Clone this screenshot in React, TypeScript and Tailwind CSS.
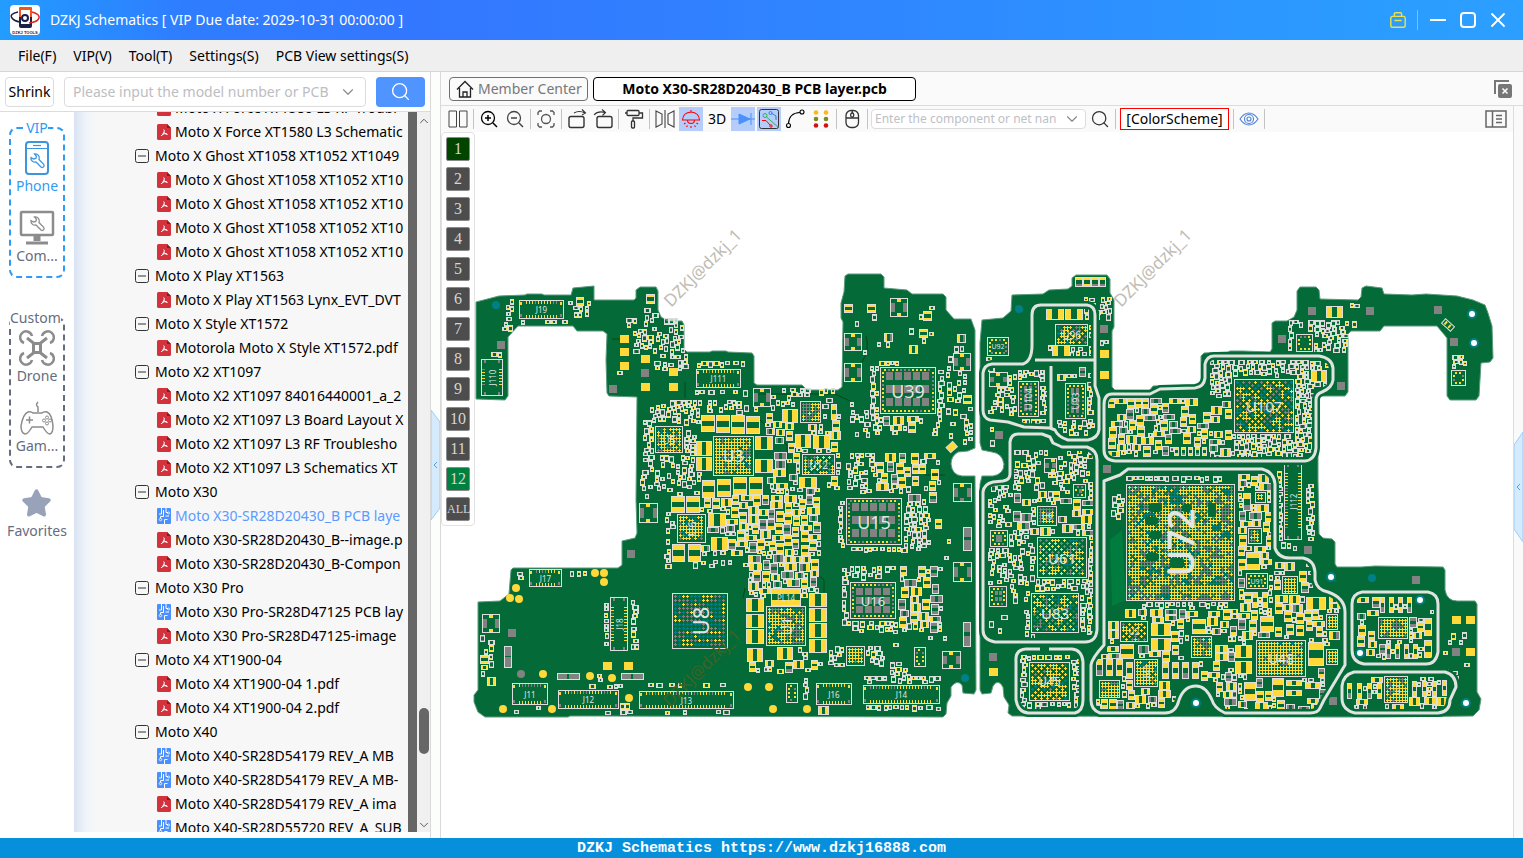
import React from "react";
import { ChevronDown, ChevronUp, Search, Star, X } from "lucide-react";

const GREEN = "#046a38";
const LINE = "#dcdfdb";
const YELLOW = "#ffd83a";
const GRAY = "#828282";
const TEAL = "#007f86";

/* ---------- board data ---------- */

const LEFT_BOARD =
  "M476 302L499 296L525 295L527 294L542 294L544 295L571 295L573 288L594 286L594 300L634 300L636 298L636 290L640 287L656 287L658 291L658 310L661 317L668 321L682 321L684 325L684 349L687 352L710 352L712 351L726 351L728 352L752 353L754 356L754 383L757 385L802 385L807 390L838 390L842 387L843 322L841 318L841 303L844 292L845 276L848 274L881 274L884 277L884 288L907 290L912 294L943 294L946 297L946 310L954 319L971 319L975 330L975 448L968 451L958 452Q951 456 951 464Q952 475 962 476L975 476L976 690L974 694L963 693L962 685Q957 679 951 687L951 696L947 703L946 714L943 717L593 716L570 716L568 717L485 717L478 712L474 702L474 695L478 690L478 602L500 601L509 594L511 570L513 568L618 568L622 565L622 541L635 538L637 533L636 500L637 397L609 396L607 393L606 360L607 334L603 331L577 331L573 326L518 326L508 337L508 396L505 400L476 399Z";
const RIGHT_BOARD =
  "M982 320L1003 318L1011 311L1012 295L1043 294L1049 290L1068 289L1072 286L1072 278L1076 275L1107 275L1110 279L1110 293L1114 300L1114 327L1112 331L1112 387L1115 390L1150 390L1153 386L1198 385L1201 381L1201 356L1204 353L1228 352L1230 351L1243 351L1270 352L1272 349L1272 323L1275 321L1287 321L1294 317L1297 310L1297 291L1300 287L1316 287L1319 290L1320 299L1358 300L1361 297L1362 288L1366 286L1382 288L1384 294L1412 295L1426 294L1457 296L1473 300L1485 305L1488 313L1492 326L1493 358L1490 362L1481 363L1479 396L1476 400L1450 400L1447 396L1447 338L1437 326L1384 326L1380 331L1351 331L1348 334L1348 392L1345 396L1320 396L1318 400L1318 480L1319 534L1323 538L1332 539L1335 542L1335 564L1337 567L1361 567L1375 566L1443 567L1445 570L1445 590Q1447 601 1457 601L1475 601L1477 604L1477 692L1481 699L1479 710L1473 716L1380 717L1320 717L1012 716L1008 713L1009 705L1004 697L1003 687Q998 678 993 686L991 693L982 694L980 690L980 484L982 476L993 476Q1004 474 1004 464Q1002 453 992 452L982 450L980 443L980 343Z";

const SHIELDS = [
  "M1032 345V315Q1032 305 1041 305H1087Q1095 306 1095 315V386L1099 398V430Q1098 438 1088 440H1068Q1058 437 1055 430L1050 428L1024 427L1008 422L990 420Q983 418 983 410V373Q984 365 992 364H1023Q1032 361 1032 345Z",
  "M1035 360H1095M1051 366V429",
  "M1010 474V442Q1011 434 1018 434H1042L1050 437L1053 443L1062 447H1087Q1097 450 1097 460V630Q1096 642 1085 642H995Q983 640 983 630V492Q984 484 993 482L1003 481Q1010 480 1010 474Z",
  "M1040 649H1026Q1015 650 1016 661V700Q1018 712 1028 713H1075Q1083 711 1083 700V662Q1082 650 1072 649H1049",
  "M1104 405Q1104 394 1112 394H1150L1160 389L1195 388Q1204 387 1205 378V364Q1207 356 1214 356H1319Q1332 358 1333 368V380Q1332 388 1322 392Q1316 394 1316 400V448Q1315 460 1305 461H1115Q1104 460 1104 450Z",
  "M1104 487V481L1120 475L1128 469H1262Q1274 472 1275 484V548Q1278 558 1290 558H1303Q1314 560 1315 572V580Q1317 590 1328 592Q1345 598 1345 612V665L1324 700L1320 708Q1318 713 1310 713H1225Q1214 708 1212 700Q1206 686 1196 686Q1184 686 1179 700Q1176 713 1165 713H1100Q1091 710 1091 700V665Q1092 658 1104 645V487",
  "M1362 592H1428Q1438 594 1438 604V652Q1436 664 1426 664H1364Q1352 662 1352 650V604Q1352 594 1362 592Z",
  "M1354 672H1445Q1456 675 1456 687L1450 700Q1450 712 1438 713H1355Q1342 710 1342 698V686Q1343 675 1354 672Z",
];

type Rect = [number, number, number, number];
type Labelled = { r: Rect; name?: string; size?: number; turn?: boolean };
type Grid = "lattice" | "diagonal" | "sparse";

// ball grids, "mix" is the share of yellow / gray balls, the rest is teal
const BGAS: (Labelled & { mix: [number, number]; grid: Grid })[] = [
  { r: [714, 437, 39, 38], name: "U3", size: 16, mix: [0.7, 0.9], grid: "lattice" },
  { r: [656, 427, 26, 25], name: "U5", size: 10, mix: [0.6, 0.85], grid: "lattice" },
  { r: [678, 515, 27, 27], name: "U6", size: 11, turn: true, mix: [0.65, 0.85], grid: "lattice" },
  { r: [767, 607, 38, 38], name: "U1", size: 14, turn: true, mix: [0.7, 0.9], grid: "lattice" },
  { r: [803, 455, 31, 19], name: "U12", size: 10, mix: [0.6, 0.85], grid: "diagonal" },
  { r: [801, 402, 19, 20], mix: [0.5, 1], grid: "lattice" },
  { r: [847, 647, 17, 18], mix: [0.9, 1], grid: "lattice" },
  { r: [673, 594, 54, 54], name: "U8", size: 22, turn: true, mix: [0.25, 0.6], grid: "sparse" },
  { r: [1056, 325, 31, 20], name: "U96", size: 10, mix: [0.6, 0.85], grid: "diagonal" },
  { r: [1038, 538, 48, 39], name: "U61", size: 15, mix: [0.55, 0.95], grid: "diagonal" },
  { r: [1032, 594, 46, 38], name: "U83", size: 15, mix: [0.5, 0.8], grid: "diagonal" },
  { r: [1030, 663, 39, 37], name: "U45", size: 12, mix: [0.6, 0.88], grid: "diagonal" },
  { r: [1038, 507, 18, 18], name: "U9", size: 8, mix: [0.5, 1], grid: "lattice" },
  { r: [1235, 380, 58, 52], name: "U107", size: 15, mix: [0.5, 0.78], grid: "diagonal" },
  { r: [1127, 485, 107, 115], name: "U72", size: 36, turn: true, mix: [0.62, 0.92], grid: "lattice" },
  { r: [1121, 622, 26, 19], name: "U2", size: 8, mix: [0.75, 0.95], grid: "diagonal" },
  { r: [1135, 660, 22, 26], name: "U41", size: 9, turn: true, mix: [0.85, 0.95], grid: "lattice" },
  { r: [1100, 681, 19, 16], mix: [0.8, 0.95], grid: "lattice" },
  { r: [1192, 637, 19, 20], mix: [0.6, 0.95], grid: "lattice" },
  { r: [1257, 641, 48, 35], name: "U48", size: 14, mix: [0.85, 0.94], grid: "lattice" },
  { r: [1379, 618, 28, 20], mix: [0.8, 1], grid: "lattice" },
  { r: [1385, 677, 22, 25], name: "U7", size: 8, turn: true, mix: [0.85, 1], grid: "lattice" },
  { r: [1283, 577, 14, 16], mix: [1, 1], grid: "lattice" },
  { r: [1327, 615, 10, 14], mix: [1, 1], grid: "lattice" },
  { r: [1327, 650, 10, 14], mix: [1, 1], grid: "lattice" },
  { r: [1249, 529, 12, 14], mix: [0.8, 1], grid: "lattice" },
  { r: [1256, 493, 9, 9], mix: [0.8, 1], grid: "lattice" },
];

const QFNS: (Labelled & { cols: number; rows: number })[] = [
  { r: [880, 367, 56, 47], name: "U39", size: 18, cols: 5, rows: 3 },
  { r: [846, 498, 56, 47], name: "U15", size: 18, cols: 5, rows: 3 },
  { r: [850, 582, 46, 37], name: "U16", size: 13, cols: 4, rows: 3 },
  { r: [1018, 381, 21, 36], name: "U104", size: 9, turn: true, cols: 2, rows: 3 },
  { r: [1065, 383, 21, 36], name: "U93", size: 9, turn: true, cols: 2, rows: 3 },
  { r: [987, 337, 22, 19], name: "U92", size: 7, cols: 0, rows: 0 },
  { r: [990, 530, 18, 17], cols: 1, rows: 1 },
  { r: [989, 586, 18, 21], cols: 2, rows: 2 },
  { r: [1073, 484, 13, 14], cols: 1, rows: 1 },
  { r: [1296, 334, 17, 18], cols: 0, rows: 0 },
  { r: [1451, 370, 15, 16], cols: 0, rows: 0 },
  { r: [786, 683, 12, 20], cols: 0, rows: 0 },
  { r: [914, 647, 12, 20], cols: 0, rows: 0 },
  { r: [1246, 573, 22, 16], name: "U91", size: 7, cols: 0, rows: 0 },
];

const CONNECTORS: Labelled[] = [
  { r: [519, 300, 45, 19], name: "J19" },
  { r: [696, 369, 45, 19], name: "J111" },
  { r: [481, 359, 22, 37], name: "J110", turn: true },
  { r: [529, 569, 33, 18], name: "J17" },
  { r: [610, 597, 18, 54], name: "J18", turn: true },
  { r: [512, 683, 36, 22], name: "J11" },
  { r: [558, 690, 61, 19], name: "J12" },
  { r: [639, 691, 95, 18], name: "J13" },
  { r: [816, 683, 36, 22], name: "J16" },
  { r: [863, 685, 77, 19], name: "J14" },
  { r: [1284, 463, 18, 77], name: "J112", turn: true },
];

// inductors and big capacitors, pads left/right when turned
const COILS: { r: Rect; side?: boolean }[] = [
  { r: [701, 415, 14, 17] }, { r: [716, 415, 14, 18] }, { r: [731, 415, 14, 19] }, { r: [746, 416, 14, 18] },
  { r: [696, 441, 16, 15], side: true }, { r: [696, 457, 16, 14], side: true },
  { r: [755, 436, 18, 14], side: true }, { r: [755, 459, 18, 14], side: true },
  { r: [702, 480, 13, 18] }, { r: [717, 479, 14, 18] }, { r: [733, 477, 14, 18] }, { r: [749, 477, 14, 18] },
  { r: [671, 496, 14, 17] }, { r: [686, 496, 14, 17] },
  { r: [708, 513, 18, 14], side: true }, { r: [711, 537, 17, 14], side: true },
  { r: [672, 544, 13, 18] }, { r: [688, 544, 13, 18] },
  { r: [746, 598, 18, 14], side: true }, { r: [746, 614, 18, 14], side: true },
  { r: [746, 629, 18, 15], side: true }, { r: [747, 648, 16, 14], side: true },
  { r: [809, 593, 18, 14], side: true }, { r: [809, 608, 18, 14], side: true },
  { r: [809, 623, 18, 15], side: true }, { r: [809, 639, 18, 14], side: true },
  { r: [777, 647, 16, 13], side: true }, { r: [771, 588, 30, 18] },
  { r: [782, 409, 16, 14], side: true }, { r: [795, 434, 16, 14], side: true },
  { r: [813, 435, 17, 14], side: true }, { r: [799, 477, 18, 11], side: true },
  { r: [831, 404, 6, 16] }, { r: [844, 304, 9, 9] }, { r: [867, 304, 9, 9] },
  { r: [923, 311, 9, 10] }, { r: [884, 333, 9, 9], side: true }, { r: [919, 329, 9, 9] },
  { r: [909, 345, 9, 9], side: true }, { r: [957, 334, 9, 9], side: true }, { r: [963, 395, 9, 9] },
  { r: [646, 294, 9, 10] }, { r: [576, 297, 8, 9] }, { r: [480, 655, 9, 9] }, { r: [487, 677, 9, 9], side: true },
  { r: [1046, 308, 18, 12], side: true }, { r: [1065, 308, 18, 12], side: true }, { r: [1052, 345, 18, 12], side: true },
  { r: [1151, 623, 20, 13], side: true }, { r: [1151, 638, 20, 13], side: true }, { r: [1192, 619, 14, 15] },
  { r: [1120, 644, 14, 15] }, { r: [1235, 645, 17, 13], side: true }, { r: [1235, 661, 17, 13], side: true },
  { r: [1096, 659, 7, 17] }, { r: [1106, 659, 7, 17] }, { r: [1116, 659, 7, 17] }, { r: [1126, 662, 7, 17] },
  { r: [1162, 662, 7, 17] }, { r: [1172, 662, 7, 17] }, { r: [1182, 662, 7, 17] }, { r: [1192, 662, 7, 17] },
  { r: [1246, 552, 14, 18] }, { r: [1243, 493, 8, 18] }, { r: [1260, 616, 14, 16] },
  { r: [1308, 642, 16, 24] }, { r: [1272, 678, 12, 19] }, { r: [1244, 682, 12, 19] },
  { r: [1286, 680, 16, 6], side: true }, { r: [1286, 690, 16, 6], side: true }, { r: [1305, 682, 16, 7], side: true },
  { r: [1306, 597, 20, 13], side: true }, { r: [1252, 592, 6, 16] }, { r: [1262, 592, 6, 16] },
  { r: [1424, 618, 8, 18] }, { r: [1424, 640, 8, 18] }, { r: [1380, 597, 5, 16] }, { r: [1389, 597, 5, 16] },
  { r: [1398, 597, 5, 16] }, { r: [1407, 597, 5, 16] }, { r: [1386, 644, 5, 15] }, { r: [1395, 644, 5, 15] },
  { r: [1404, 644, 5, 15] }, { r: [1413, 644, 5, 15] }, { r: [1347, 683, 5, 16] }, { r: [1357, 683, 5, 16] },
  { r: [1367, 683, 5, 16] }, { r: [1377, 683, 5, 16] }, { r: [1412, 681, 5, 16] }, { r: [1422, 681, 5, 16] },
  { r: [1432, 681, 5, 16] }, { r: [1442, 680, 5, 16] }, { r: [1326, 306, 17, 12], side: true },
  { r: [1311, 370, 16, 12], side: true }, { r: [1174, 447, 5, 9] }, { r: [1181, 447, 5, 9] }, { r: [1188, 447, 5, 9] },
  { r: [1195, 447, 5, 9] }, { r: [1202, 447, 5, 9] },
  { r: [1075, 277, 8, 10] }, { r: [1083, 277, 8, 10] }, { r: [1091, 277, 8, 10] }, { r: [1099, 277, 7, 10] },
];

const CLIPS: Rect[] = [
  [753, 388, 18, 19], [639, 503, 19, 20], [890, 298, 18, 19], [844, 333, 18, 18], [844, 363, 18, 19],
  [953, 353, 18, 18], [953, 483, 19, 19], [953, 562, 19, 20], [942, 651, 19, 18], [482, 614, 18, 19],
  [989, 372, 19, 15], [1044, 458, 13, 15],
];
const BARS: Rect[] = [
  [963, 527, 9, 24], [963, 622, 8, 25], [504, 646, 8, 22], [557, 673, 23, 7], [621, 673, 23, 7],
];
const GRAY_PADS = [
  [497, 341], [641, 369], [609, 385], [627, 550], [508, 629], [1100, 325], [995, 431], [1103, 465], [989, 653],
  [1308, 307], [1366, 307], [1434, 306], [1450, 338], [1278, 335], [1337, 382], [1304, 546], [1412, 576],
  [1452, 648], [1329, 697],
];
const YELLOW_PADS = [
  [620, 335], [620, 348], [620, 362], [641, 355], [641, 383], [669, 383], [669, 368], [603, 662], [624, 662],
  [1100, 350], [1100, 371], [1452, 616], [1466, 616], [1466, 648], [989, 668],
];
const POINTS = [
  [595, 573], [604, 573], [604, 582], [516, 588], [510, 598], [519, 599], [543, 674], [590, 676], [612, 678],
  [503, 709], [552, 709], [629, 698], [748, 687], [769, 687], [773, 709], [807, 709],
];
const HOLES = [[1472, 314], [1474, 343], [1331, 577], [1420, 600], [1360, 653], [1466, 703], [1196, 703]];
const TEAL_DOTS = [[496, 305], [965, 678], [1019, 309], [1372, 578]];

// areas filled with chip resistors / capacitors: x, y, w, h, density, size class
const ZONES: [number, number, number, number, number, number][] = [
  [506, 298, 8, 22, 0.9, 0], [499, 322, 14, 10, 0.6, 0], [516, 320, 54, 5, 0.7, 0], [568, 300, 22, 18, 0.6, 0],
  [491, 352, 15, 6, 0.9, 0], [644, 304, 14, 20, 0.5, 0], [626, 318, 58, 16, 0.5, 0], [633, 330, 52, 24, 0.6, 0],
  [654, 354, 34, 18, 0.5, 0], [614, 370, 22, 14, 0.4, 0], [690, 390, 60, 6, 0.7, 0], [697, 361, 50, 7, 0.8, 0],
  [650, 400, 50, 26, 0.75, 0], [643, 420, 12, 46, 0.7, 0], [682, 430, 14, 60, 0.8, 0], [647, 455, 60, 40, 0.5, 0],
  [695, 400, 70, 16, 0.7, 0], [638, 470, 22, 30, 0.45, 0], [770, 388, 66, 26, 0.55, 0], [765, 410, 75, 80, 0.7, 1],
  [700, 495, 120, 60, 0.88, 1], [762, 480, 58, 110, 0.9, 1], [664, 512, 14, 50, 0.7, 0], [650, 560, 100, 8, 0.6, 0],
  [748, 555, 70, 42, 0.85, 1], [748, 660, 70, 14, 0.5, 1], [793, 645, 14, 22, 0.6, 0], [800, 660, 24, 6, 0.7, 0],
  [846, 306, 104, 50, 0.28, 0], [870, 366, 9, 58, 0.95, 0], [937, 370, 7, 52, 0.9, 0], [876, 361, 26, 5, 0.9, 0],
  [850, 402, 30, 36, 0.5, 0], [868, 416, 72, 20, 0.75, 1], [946, 346, 26, 98, 0.5, 0], [848, 300, 40, 40, 0.25, 0],
  [845, 453, 30, 40, 0.7, 0], [870, 453, 70, 40, 0.75, 1], [838, 500, 8, 48, 0.8, 0], [904, 506, 26, 44, 0.9, 0],
  [905, 478, 38, 34, 0.6, 1], [850, 547, 60, 5, 0.8, 0], [926, 500, 26, 60, 0.35, 1], [842, 568, 8, 60, 0.85, 0],
  [850, 566, 46, 14, 0.7, 0], [898, 566, 44, 66, 0.7, 1], [852, 621, 46, 12, 0.9, 0], [828, 646, 56, 22, 0.85, 0],
  [880, 636, 70, 10, 0.2, 0], [890, 662, 20, 22, 0.8, 0], [862, 676, 82, 8, 0.9, 0], [866, 705, 74, 6, 0.9, 0],
  [645, 683, 90, 6, 0.65, 0], [585, 684, 40, 6, 0.7, 0], [620, 703, 20, 12, 0.7, 0], [480, 634, 14, 50, 0.55, 0],
  [604, 602, 6, 46, 0.8, 0], [631, 600, 7, 50, 0.9, 0], [568, 571, 24, 7, 0.9, 0], [517, 572, 8, 12, 0.9, 0],
  [513, 706, 30, 7, 0.7, 1], [600, 711, 30, 4, 0.6, 0], [665, 710, 70, 4, 0.5, 0], [803, 678, 8, 22, 0.8, 0],
  [818, 706, 26, 8, 0.7, 1], [745, 663, 18, 10, 0.7, 1], [597, 674, 10, 8, 0.9, 0],
  // right board
  [1048, 307, 44, 50, 0.7, 0], [1083, 297, 28, 26, 0.7, 0], [1100, 340, 10, 10, 0.8, 0], [986, 356, 26, 4, 0.9, 0],
  [988, 367, 28, 50, 0.55, 0], [1018, 370, 30, 9, 0.8, 0], [1040, 378, 8, 44, 0.85, 0], [1087, 372, 7, 58, 0.85, 0],
  [1055, 366, 30, 14, 0.7, 1], [1056, 420, 34, 15, 0.6, 0], [1022, 419, 22, 6, 0.9, 0], [990, 425, 5, 24, 0.8, 0],
  [1013, 450, 80, 40, 0.6, 0], [1013, 480, 80, 56, 0.7, 1], [988, 485, 48, 100, 0.6, 0], [988, 570, 30, 66, 0.4, 0],
  [1024, 540, 12, 100, 0.85, 0], [1034, 578, 54, 16, 0.85, 0], [1087, 536, 7, 104, 0.9, 0], [1080, 594, 8, 40, 0.8, 0],
  [1108, 398, 125, 58, 0.72, 1], [1210, 360, 104, 98, 0.95, 0], [1314, 361, 14, 28, 0.8, 0], [1020, 655, 60, 54, 0.85, 0],
  [1111, 494, 14, 26, 0.9, 0], [1126, 476, 100, 7, 0.85, 0], [1238, 474, 34, 238, 0.8, 1], [1142, 602, 86, 7, 0.85, 0],
  [1108, 609, 130, 34, 0.72, 1], [1094, 645, 142, 36, 0.72, 1], [1096, 680, 80, 30, 0.7, 1], [1216, 680, 30, 30, 0.8, 1],
  [1274, 562, 38, 30, 0.8, 1], [1270, 594, 70, 70, 0.8, 1], [1245, 665, 80, 46, 0.7, 1], [1277, 470, 6, 70, 0.95, 0],
  [1306, 484, 8, 56, 0.9, 0], [1281, 542, 16, 8, 0.9, 0], [1356, 597, 78, 62, 0.75, 1], [1347, 677, 102, 32, 0.75, 1],
  [1442, 632, 32, 50, 0.3, 0], [1288, 320, 60, 34, 0.75, 0], [1349, 303, 10, 7, 0.9, 0], [1350, 321, 12, 6, 0.9, 0],
  [1450, 355, 16, 13, 0.95, 0], [1318, 384, 10, 5, 0.9, 0],
];

/* ---------- board drawing ---------- */

function seeded(seed: number) {
  let a = seed;
  return () => {
    a = (a + 0x6d2b79f5) | 0;
    let t = Math.imul(a ^ (a >>> 15), 1 | a);
    t = (t + Math.imul(t ^ (t >>> 7), 61 | t)) ^ t;
    return ((t ^ (t >>> 14)) >>> 0) / 4294967296;
  };
}

function buildBoard() {
  const rnd = seeded(20430);
  const d = { outline: "", yellow: "", gray: "", teal: "" };
  const used = new Set<number>();

  const fill = (key: "yellow" | "gray" | "teal", x: number, y: number, w: number, h: number) => {
    d[key] += `M${x} ${y}h${w}v${h}h${-w}z`;
  };
  const frame = (x: number, y: number, w: number, h: number) => {
    d.outline += `M${x + 0.5} ${y + 0.5}h${w - 1}v${h - 1}h${1 - w}z`;
  };
  const mark = (x: number, y: number, w: number, h: number) => {
    for (let j = y; j < y + h; j++) for (let i = x; i < x + w; i++) used.add(j * 2000 + i);
  };
  const isFree = (x: number, y: number, w: number, h: number) => {
    for (let j = y; j < y + h; j++) for (let i = x; i < x + w; i++) if (used.has(j * 2000 + i)) return false;
    return true;
  };
  const metal = () => (rnd() < 0.72 ? "yellow" : "gray");

  BGAS.forEach(({ r: [x, y, w, h], mix, grid }) => {
    mark(x - 2, y - 2, w + 4, h + 4);
    frame(x - 1, y - 1, w + 2, h + 2);
    const pitch = grid === "sparse" ? 4 : 3;
    const noise: Record<string, number> = {};
    for (let j = y + 1; j + 3 <= y + h; j += pitch) {
      for (let i = x + 1; i + 3 <= x + w; i += pitch) {
        if (grid === "diagonal" && ((i - x - 1) / 3 + (j - y - 1) / 3) % 2 === 1 && rnd() < 0.7) continue;
        const key = `${Math.floor(i / 10)}-${Math.floor(j / 9)}`;
        noise[key] = noise[key] ?? rnd();
        const n = rnd() < 0.5 ? noise[key] : rnd();
        const c = n < mix[0] ? "yellow" : n < mix[1] ? "gray" : "teal";
        fill(c, i, j + 1, 3, 1);
        fill(c, i + 1, j, 1, 1);
        fill(c, i + 1, j + 2, 1, 1);
      }
    }
  });

  QFNS.forEach(({ r: [x, y, w, h], cols, rows }) => {
    mark(x - 1, y - 1, w + 2, h + 2);
    frame(x, y, w, h);
    for (let i = x + 4; i < x + w - 4; i += 4) {
      fill(metal(), i, y + 2, 2, 2);
      fill(metal(), i, y + h - 4, 2, 2);
    }
    for (let j = y + 5; j < y + h - 5; j += 4) {
      fill(metal(), x + 2, j, 2, 2);
      fill(metal(), x + w - 4, j, 2, 2);
    }
    if (!cols) return;
    const cw = Math.floor((w - 10) / cols);
    const ch = Math.floor((h - 8) / rows);
    const ox = x + Math.floor((w - cw * cols) / 2) + 1;
    const oy = y + Math.floor((h - ch * rows) / 2) + 1;
    for (let c = 0; c < cols; c++)
      for (let k = 0; k < rows; k++)
        fill("gray", ox + c * cw, oy + k * ch, Math.max(cw - 2, 3), Math.max(ch - (ch > 11 ? 5 : 2), 4));
  });

  CONNECTORS.forEach(({ r: [x, y, w, h], turn }) => {
    mark(x - 1, y - 1, w + 2, h + 2);
    frame(x, y, w, h);
    if (turn) {
      for (let j = y + 10; j < y + h - 10; j += 3) {
        fill(metal(), x + 1, j, 3, 1);
        fill("yellow", x + w - 4, j, 3, 1);
      }
      [y + 1, y + h - 4].forEach((j) => {
        fill("gray", x + 3, j, 2, 3);
        fill("gray", x + w - 5, j, 2, 3);
      });
    } else {
      for (let i = x + 7; i < x + w - 7; i += 3) {
        fill(metal(), i, y + 1, 1, 3);
        fill("yellow", i, y + h - 4, 1, 3);
      }
      [x + 1, x + w - 4].forEach((i) => {
        fill("yellow", i, y + 2, 2, 3);
        fill("gray", i, y + h - 5, 2, 3);
      });
    }
  });

  COILS.forEach(({ r: [x, y, w, h], side }) => {
    mark(x, y, w, h);
    frame(x, y, w, h);
    if (side) {
      const p = Math.max(2, Math.floor((w - 2) * 0.36));
      fill("yellow", x + 1, y + 1, p, h - 2);
      fill(w > 12 ? "yellow" : metal(), x + w - 1 - p, y + 1, p, h - 2);
    } else {
      const p = Math.max(2, Math.floor((h - 2) * 0.36));
      fill("yellow", x + 1, y + 1, w - 2, p);
      fill(w > 12 ? "yellow" : metal(), x + 1, y + h - 1 - p, w - 2, p);
    }
  });

  CLIPS.forEach(([x, y, w, h]) => {
    mark(x, y, w, h);
    frame(x, y, w, h);
    fill("gray", x + 1, y + 5, 4, h - 10);
    fill("gray", x + w - 5, y + 5, 4, h - 10);
    fill("yellow", x + 7, y + 1, 4, 3);
    fill(metal(), x + 7, y + h - 4, 4, 3);
  });
  BARS.forEach(([x, y, w, h]) => {
    mark(x, y, w, h);
    frame(x, y, w, h);
    fill("gray", x, y, w > h ? 10 : w, w > h ? h : 10);
    fill("gray", w > h ? x + w - 11 : x, w > h ? y : y + h - 11, w > h ? 11 : w, w > h ? h : 11);
  });
  GRAY_PADS.forEach(([x, y]) => {
    mark(x - 1, y - 1, 10, 10);
    fill("gray", x, y, 8, 8);
  });
  YELLOW_PADS.forEach(([x, y]) => {
    mark(x - 1, y - 1, 10, 10);
    fill("yellow", x, y, 9, 8);
  });
  POINTS.forEach(([x, y]) => mark(x - 5, y - 5, 10, 10));
  HOLES.forEach(([x, y]) => mark(x - 6, y - 6, 12, 12));
  mark(1178, 684, 36, 34);
  for (let i = 0; i < 50; i++) mark(1345 - Math.round(i * 0.55), 664 + i, 30, 1);

  const small: [number, number][] = [[6, 4], [4, 6], [7, 5], [5, 7], [5, 4], [4, 5]];
  const medium: [number, number][] = [[13, 8], [8, 11], [11, 9], [9, 7], [7, 10], [12, 6]];
  ZONES.forEach(([zx, zy, zw, zh, density, size]) => {
    const passes = size ? [medium, small] : [small];
    passes.forEach((sizes, pass) => {
      const rate = size && pass === 0 ? density * 0.35 : density * 0.5;
      for (let y = zy; y < zy + zh; y++) {
        for (let x = zx; x < zx + zw; x++) {
          if (used.has(y * 2000 + x) || rnd() > rate) continue;
          const [w, h] = sizes[Math.floor(rnd() * sizes.length)];
          if (x + w > zx + zw + 1 || y + h > zy + zh + 1 || !isFree(x, y, w, h)) continue;
          mark(x, y, w, h);
          if (density < 0.5 && rnd() < 0.6) continue;
          if (rnd() > density + 0.1) continue;
          frame(x, y, w, h);
          const a = metal();
          const b = rnd() < 0.7 ? a : metal();
          if (w >= h) {
            const p = Math.max(1, Math.floor((w - 2) / 2.6));
            fill(a, x + 1, y + 1, p, h - 2);
            fill(b, x + w - 1 - p, y + 1, p, h - 2);
          } else {
            const p = Math.max(1, Math.floor((h - 2) / 2.6));
            fill(a, x + 1, y + 1, w - 2, p);
            fill(b, x + 1, y + h - 1 - p, w - 2, p);
          }
        }
      }
    });
  });
  return d;
}

const board = buildBoard();

const PartLabel = ({ r: [x, y, w, h], name, size = 8, turn }: Labelled) => {
  if (!name) return null;
  const cx = x + w / 2;
  const cy = y + h / 2;
  return (
    <text
      x={cx}
      y={cy}
      fontSize={size}
      textAnchor="middle"
      dominantBaseline="central"
      transform={turn ? `rotate(-90 ${cx} ${cy})` : undefined}
      strokeWidth={size > 30 ? 1 : 0}
      stroke="#e2e6e6"
    >
      {name}
    </text>
  );
};

const Watermark = ({ x, y, fill }: { x: number; y: number; fill: string }) => (
  <text transform={`translate(${x} ${y}) rotate(-45)`} fontSize="17" fill={fill}>
    DZKJ@dzkj_1
  </text>
);

const Board = () => (
  <svg viewBox="441 132 1072 706" className="block h-full w-full" role="img" aria-label="PCB layout">
    <path d={LEFT_BOARD} fill={GREEN} stroke="#5a9c7c" strokeWidth="1" />
    <path d={RIGHT_BOARD} fill={GREEN} stroke="#5a9c7c" strokeWidth="1" />
    <g fill="none" stroke="#004a14">
      <path d="M754 394H835L850 401M760 420L787 445V480M700 553L712 553V551H745M816 573L824 580V592M745 588L743 598M866 336Q870 350 862 362" />
      <path d="M620 339H612M685 382V398M925 475H945M900 598H920" />
    </g>
    <path d="M1110 540L1122 530L1126 600L1112 606Z" fill="#007c3e" />
    <g shapeRendering="crispEdges">
      <path d={board.gray} fill={GRAY} />
      <path d={board.teal} fill={TEAL} />
      <path d={board.yellow} fill={YELLOW} />
      <path d={board.outline} fill="none" stroke={LINE} strokeWidth="1" />
    </g>
    <g fill={GREEN}>
      {[[1149, 503, 13, 9], [1145, 517, 13, 8], [1149, 531, 13, 8], [1146, 553, 13, 8], [1182, 504, 10, 8], [1208, 503, 8, 14], [1170, 558, 14, 10]].map(
        ([x, y, w, h]) => (
          <rect key={`${x}-${y}`} x={x} y={y} width={w} height={h} rx="3" />
        )
      )}
    </g>
    <g fill="none" strokeLinejoin="round">
      {SHIELDS.map((s) => (
        <path key={s} d={s} stroke={GREEN} strokeWidth="8" />
      ))}
      {SHIELDS.map((s) => (
        <path key={s} d={s} stroke="#e0e3e0" strokeWidth="3" />
      ))}
    </g>
    {POINTS.map(([x, y]) => (
      <circle key={`${x}-${y}`} cx={x} cy={y} r="4" fill={YELLOW} />
    ))}
    <circle cx="521" cy="674" r="4" fill={GRAY} />
    {TEAL_DOTS.map(([x, y]) => (
      <circle key={`${x}-${y}`} cx={x} cy={y} r="4" fill={TEAL} />
    ))}
    {HOLES.map(([x, y]) => (
      <g key={`${x}-${y}`}>
        <circle cx={x} cy={y} r="5" fill={TEAL} />
        <circle cx={x} cy={y} r="3" fill="#fff" />
      </g>
    ))}
    <rect x="-4" y="-3" width="9" height="7" fill={YELLOW} stroke={LINE} transform="translate(951 447) rotate(-42)" />
    <g transform="translate(1448 325) rotate(42)" stroke={LINE}>
      <rect x="-6" y="-3" width="12" height="6" fill={GREEN} />
      <path d="M-4 -2h2v4h-2zM1 -2h2v4h-2z" fill={YELLOW} stroke="none" />
    </g>
    <g fill="#dfe6e6" className="font-['Noto_Sans',sans-serif]">
      {[...BGAS, ...QFNS, ...CONNECTORS, { r: [771, 588, 30, 18] as Rect, name: "PL14", size: 8 }].map((p) => (
        <PartLabel key={p.r.join()} r={p.r} name={p.name} size={p.size} turn={"turn" in p ? p.turn : false} />
      ))}
    </g>
    <g className="font-['Noto_Sans',sans-serif]">
      <Watermark x={671} y={308} fill="#bfbcb4" />
      <Watermark x={1121} y={308} fill="#bfbcb4" />
      <Watermark x={670} y={708} fill="#3d6426" />
    </g>
  </svg>
);

/* ---------- icons ---------- */

const Icon = ({ children, size = 20, className = "" }: { children: React.ReactNode; size?: number; className?: string }) => (
  <svg width={size} height={size} viewBox="0 0 20 20" fill="none" stroke="currentColor" strokeWidth="1.3" className={className}>
    {children}
  </svg>
);

const PdfIcon = () => (
  <svg width="14" height="16" viewBox="0 0 14 16" className="shrink-0">
    <path d="M1.5 0H10l4 4v10.500q0 1.500-1.500 1.500h-11Q0 16 0 14.500v-13Q0 0 1.500 0z" fill="#d2323c" />
    <path d="M10 0l4 4h-4z" fill="#8d1a22" />
    <path d="M6.500 5.500q1.200 0 .6 2.500T4 12M6.600 8q1 2 4 2.500M5 10.500q2.500-1.200 5-.8" stroke="#fff" strokeWidth="1" fill="none" />
  </svg>
);

const PcbIcon = () => (
  <svg width="14" height="16" viewBox="0 0 14 16" className="shrink-0">
    <rect width="14" height="16" rx="1" fill="#4a90ff" />
    <path d="M4.500 0v6H2M9 0v4.500h2M6.500 2v6.500H3.500v2M8.500 8H12M7.500 16v-4.500h3" stroke="#fff" strokeWidth="1" fill="none" />
    <circle cx="3.500" cy="11.500" r="1.200" stroke="#fff" fill="none" strokeWidth=".8" />
    <circle cx="11.500" cy="5" r="1" stroke="#fff" fill="none" strokeWidth=".8" />
  </svg>
);

const Wrench = ({ x, y }: { x: number; y: number }) => (
  <g transform={`translate(${x} ${y})`}>
    <path d="M1 4.500A4 4 0 0 0 6 9l5 5q1.500 1 2.600-.1t.1-2.600L9 6.500A4 4 0 0 0 4.500 1L6.500 3.300 5.800 5.500 3.500 6z" strokeWidth="1.300" />
  </g>
);

const PhoneIcon = () => (
  <svg width="36" height="36" viewBox="0 0 36 36" fill="none" stroke="#3d95dc" strokeWidth="2">
    <rect x="7" y="2" width="22" height="32" rx="3" />
    <path d="M7 8.500h22" strokeWidth="1" />
    <path d="M14 5.500h8" strokeWidth="1.200" />
    <Wrench x={11} y={13} />
  </svg>
);

const ComputerIcon = () => (
  <svg width="36" height="36" viewBox="0 0 36 36" fill="none" stroke="#8c8c8c" strokeWidth="2.500">
    <rect x="2" y="2" width="32" height="23" rx="1" />
    <g strokeWidth="2"><Wrench x={11} y={6} /></g>
    <path d="M18 26v5" strokeWidth="7" />
    <path d="M7 33h22" strokeWidth="3" />
  </svg>
);

const DroneIcon = () => (
  <svg width="36" height="36" viewBox="0 0 36 36" fill="none" stroke="#8c8c8c" strokeWidth="2.500">
    <path d="M5 13A6 6 0 1 1 13 6M31 13A6 6 0 1 0 23 6M5 23A6 6 0 1 0 13 30M31 23A6 6 0 1 1 23 30" />
    <path d="M8 8l7 5.500h6L28 8M8 28l7-5.500h6l7 5.500M14.500 13v10M21.500 13v10" strokeWidth="3" />
  </svg>
);

const GameIcon = () => (
  <svg width="36" height="36" viewBox="0 0 36 36" fill="none" stroke="#8c8c8c" strokeWidth="1.500">
    <path d="M19 12V7q-3-2 0-5" />
    <path d="M9 12q3-1 5 1h9q2-2 5-1 5 2 6 14 0 7-3 8-3 0-7-7H13q-4 7-7 7-4-1-4-8Q4 14 9 12z" />
    <path d="M7 20h7M10.500 16.500v7" />
    <circle cx="28" cy="17.500" r="1.500" strokeWidth="1" />
    <circle cx="28" cy="23.500" r="1.500" strokeWidth="1" />
    <circle cx="25" cy="20.500" r="1.500" strokeWidth="1" />
    <circle cx="31" cy="20.500" r="1.500" strokeWidth="1" />
  </svg>
);

const LogoIcon = () => (
  <svg width="30" height="30" viewBox="0 0 30 30" className="shrink-0">
    <rect width="30" height="30" rx="4" fill="#fff" />
    <rect x="9" y="2" width="13" height="21" rx="2" fill="#1b2048" />
    <path d="M9 12V4q0-2 2-2h9q2 0 2 2v8z" fill="#f0561d" />
    <rect x="11" y="5" width="9" height="14" fill="#fff" />
    <circle cx="15" cy="13" r="3" fill="none" stroke="#1b2048" strokeWidth="2" />
    <path d="M8 7Q-1 9 2 13q2 3 8 4" fill="none" stroke="#1b2048" strokeWidth="1.500" />
    <path d="M22 7q8 2 7 6-1 4-10 5" fill="none" stroke="#e1261c" strokeWidth="1.500" />
    <text x="15" y="29" fontSize="4" fontWeight="700" textAnchor="middle" fill="#1b2048" className="font-['Liberation_Sans',sans-serif]">
      DZKJ TOOLS
    </text>
  </svg>
);

/* ---------- side bar ---------- */

type Node = { kind: "folder" | "pdf" | "pcb"; label: string; active?: boolean };

const TREE: Node[] = [
  { kind: "pdf", label: "Moto X Force XT1580 L3 RF Troubl" },
  { kind: "pdf", label: "Moto X Force XT1580 L3 Schematic" },
  { kind: "folder", label: "Moto X Ghost XT1058 XT1052 XT1049" },
  { kind: "pdf", label: "Moto X Ghost XT1058 XT1052 XT10" },
  { kind: "pdf", label: "Moto X Ghost XT1058 XT1052 XT10" },
  { kind: "pdf", label: "Moto X Ghost XT1058 XT1052 XT10" },
  { kind: "pdf", label: "Moto X Ghost XT1058 XT1052 XT10" },
  { kind: "folder", label: "Moto X Play XT1563" },
  { kind: "pdf", label: "Moto X Play XT1563 Lynx_EVT_DVT" },
  { kind: "folder", label: "Moto X Style XT1572" },
  { kind: "pdf", label: "Motorola Moto X Style XT1572.pdf" },
  { kind: "folder", label: "Moto X2 XT1097" },
  { kind: "pdf", label: "Moto X2 XT1097 84016440001_a_2" },
  { kind: "pdf", label: "Moto X2 XT1097 L3 Board Layout X" },
  { kind: "pdf", label: "Moto X2 XT1097 L3 RF Troublesho" },
  { kind: "pdf", label: "Moto X2 XT1097 L3 Schematics XT" },
  { kind: "folder", label: "Moto X30" },
  { kind: "pcb", label: "Moto X30-SR28D20430_B PCB laye", active: true },
  { kind: "pdf", label: "Moto X30-SR28D20430_B--image.p" },
  { kind: "pdf", label: "Moto X30-SR28D20430_B-Compon" },
  { kind: "folder", label: "Moto X30 Pro" },
  { kind: "pcb", label: "Moto X30 Pro-SR28D47125 PCB lay" },
  { kind: "pdf", label: "Moto X30 Pro-SR28D47125-image" },
  { kind: "folder", label: "Moto X4 XT1900-04" },
  { kind: "pdf", label: "Moto X4 XT1900-04 1.pdf" },
  { kind: "pdf", label: "Moto X4 XT1900-04 2.pdf" },
  { kind: "folder", label: "Moto X40" },
  { kind: "pcb", label: "Moto X40-SR28D54179 REV_A MB" },
  { kind: "pcb", label: "Moto X40-SR28D54179 REV_A MB-" },
  { kind: "pdf", label: "Moto X40-SR28D54179 REV_A ima" },
  { kind: "pcb", label: "Moto X40-SR28D55720 REV_A_SUB" },
];

const TreeRow = ({ kind, label, active }: Node) => (
  <li className="h-6">
    <button
      className={`flex h-6 w-full items-center whitespace-nowrap text-left text-sm ${
        kind === "folder" ? "gap-[6px] pl-[61px]" : "gap-1 pl-[83px]"
      } ${active ? "text-[#5b9bff]" : "text-black"}`}
    >
      {kind === "folder" && (
        <svg width="14" height="14" viewBox="0 0 14 14" fill="none" stroke="#333" className="shrink-0">
          <rect x=".5" y=".5" width="13" height="13" rx="2" />
          <path d="M3 7h8" />
        </svg>
      )}
      {kind === "pdf" && <PdfIcon />}
      {kind === "pcb" && <PcbIcon />}
      <span>{label}</span>
    </button>
  </li>
);

const Category = ({ icon, label, className }: { icon: React.ReactNode; label: string; className: string }) => (
  <button className={`flex w-full flex-col items-center text-sm leading-5 ${className}`}>
    {icon}
    <span>{label}</span>
  </button>
);

const Categories = () => (
  <nav className="flex w-[74px] shrink-0 flex-col items-center bg-white pt-2">
    <fieldset className="flex h-[158px] w-14 flex-col gap-[14px] rounded-lg border-2 border-dashed border-[#2f9bf5] pt-1">
      <legend className="mx-auto text-sm leading-4 text-[#2f9bf5]">VIP</legend>
      <Category icon={<PhoneIcon />} label="Phone" className="text-[#2f9bf5]" />
      <Category icon={<ComputerIcon />} label="Com..." className="text-[#666c80]" />
    </fieldset>
    <fieldset className="mt-8 flex h-[158px] w-14 flex-col gap-[14px] rounded-lg border-2 border-dashed border-[#666c80] pt-1">
      <legend className="-mx-px text-sm leading-4 text-[#666c80]">Custom</legend>
      <Category icon={<DroneIcon />} label="Drone" className="text-[#666c80]" />
      <Category icon={<GameIcon />} label="Gam..." className="text-[#666c80]" />
    </fieldset>
    <button className="mt-5 flex flex-col items-center gap-[2px] text-sm leading-5 text-[#666c80]">
      <Star size={31} fill="#98a3b9" stroke="#98a3b9" />
      Favorites
    </button>
  </nav>
);

const Sidebar = () => (
  <aside className="flex w-[431px] shrink-0 flex-col border-r border-[#d9d9d9] bg-white">
    <form className="flex h-10 shrink-0 items-center border-b border-[#dcdcdc] pl-[5px]">
      <button type="button" className="h-[30px] w-[49px] rounded border border-[#dcdcdc] text-sm text-black">
        Shrink
      </button>
      <label className="ml-[10px] flex h-[30px] w-[302px] items-center rounded border border-[#dcdcdc] pl-2 pr-2">
        <input
          aria-label="Model number"
          placeholder="Please input the model number or PCB"
          className="w-0 flex-1 text-sm outline-none placeholder:text-[#bdbdc2]"
        />
        <ChevronDown size={18} strokeWidth={1.5} className="ml-1 text-[#888]" />
      </label>
      <button type="button" aria-label="Search" className="ml-[10px] flex h-[30px] w-[49px] items-center justify-center rounded bg-[#4f94ff] text-white">
        <Search size={21} strokeWidth={1.5} />
      </button>
    </form>
    <div className="mb-[6px] flex min-h-0 flex-1">
      <Categories />
      <div className="flex min-w-0 flex-1 bg-[#f7f7f7]">
        <div className="min-w-0 flex-1 overflow-hidden bg-[linear-gradient(90deg,#d8e3f3,#f0f4f9_12px,#f7f7f7_24px)]">
          <ul className="-mt-4">
            {TREE.map((n, i) => (
              <TreeRow key={i} {...n} />
            ))}
          </ul>
        </div>
        <div className="w-[9px] bg-[#666]" />
        <div className="flex w-[13px] flex-col items-center bg-[#f0f0f0]">
          <ChevronUp size={14} strokeWidth={1.5} className="mt-[2px] shrink-0 text-[#444]" />
          <div className="flex-[580]" />
          <div className="h-[46px] w-[10px] shrink-0 rounded-full bg-[#666]" />
          <div className="flex-[64]" />
          <ChevronDown size={14} strokeWidth={1.5} className="shrink-0 text-[#444]" />
        </div>
      </div>
    </div>
  </aside>
);

/* ---------- tool bar ---------- */

const Tool = ({ label, on, children }: { label: string; on?: boolean; children: React.ReactNode }) => (
  <button
    aria-label={label}
    className={`flex h-6 w-6 shrink-0 items-center justify-center text-sm text-black ${on ? "bg-[#b5cdfa]" : ""}`}
  >
    {children}
  </button>
);

const Sep = () => <span className="mx-px h-5 w-px shrink-0 bg-[#c4c4c4]" />;

const Toolbar = () => (
  <div className="flex h-[26px] shrink-0 items-center gap-[2px] bg-[#fafafa] pl-[5px] pr-[5px]">
    <Tool label="Split view">
      <Icon><path d="M1 2h7.500v16H1zM11.500 2H19v16h-7.500z" stroke="#444" strokeWidth="1" /></Icon>
    </Tool>
    <Sep />
    <Tool label="Zoom in">
      <Icon><circle cx="9" cy="9" r="6.500" /><path d="M14 14l4 4M6 9h6M9 6v6" strokeWidth="1.500" /></Icon>
    </Tool>
    <Tool label="Zoom out">
      <Icon><g stroke="#444"><circle cx="9" cy="9" r="6.500" /><path d="M14 14l4 4M6 9h6" strokeWidth="1.500" /></g></Icon>
    </Tool>
    <Sep />
    <Tool label="Fit">
      <Icon><g stroke="#555"><circle cx="10" cy="10" r="4.500" /><path d="M2 6V3.500L3.500 2H6M14 2h2.500L18 3.500V6M18 14v2.500L16.500 18H14M6 18H3.500L2 16.500V14" /></g></Icon>
    </Tool>
    <Sep />
    <Tool label="Rotate right">
      <Icon><g stroke="#333"><rect x="2" y="7.500" width="15" height="11" rx="2" strokeWidth="1.400" /><path d="M7 4Q12 1 18 4M15 0.500L18.500 4l-3.500 2" strokeWidth="1.100" /></g></Icon>
    </Tool>
    <Tool label="Rotate left">
      <Icon><g stroke="#333"><rect x="4" y="7.500" width="15" height="11" rx="2" strokeWidth="1.400" /><path d="M1 6Q5 1.500 12 3.500M9 .5l3.500 3-3 3" strokeWidth="1.100" /></g></Icon>
    </Tool>
    <Sep />
    <Tool label="Paint">
      <Icon><g stroke="#333"><rect x="3" y="1.500" width="12" height="5" rx="1" /><path d="M3 4H1M15 4h3.500v5H9v3" /><rect x="7.500" y="12" width="3" height="7" rx="1" /></g></Icon>
    </Tool>
    <Sep />
    <Tool label="Mirror">
      <Icon><path d="M1 2l6 3v10l-6 3zM10 1v18M19 2l-6 3v10l6 3z" stroke="#444" strokeWidth="1.100" /></Icon>
    </Tool>
    <Tool label="Highlight" on>
      <Icon><g stroke="red" strokeWidth="1.100"><path d="M1.500 11Q2 3.500 10 3q8 .5 8.500 8zM10 3V1M6.500 11q0 3.500 3.500 3.500t3.500-3.500M4.500 14L3 15M15.500 14l1.500 1M6.500 16.500l-1 1.500M13.500 16.500l1 1.500M10 17v2" /></g></Icon>
    </Tool>
    <Tool label="3D">3D</Tool>
    <Tool label="Diode" on>
      <svg width="24" height="20" viewBox="0 0 24 20" fill="#4a90ff" stroke="#4a90ff"><path d="M0 10h24M20 4v12" strokeWidth="1" /><path d="M8 5l11 5-11 5z" /></svg>
    </Tool>
    <Tool label="Nets" on>
      <Icon><g strokeWidth="1"><rect x=".5" y=".5" width="19" height="19" rx="2" stroke="#333" /><path d="M7.500 8L19 18" stroke="#2faf5a" /><circle cx="6" cy="6.500" r="2" stroke="#2faf5a" /><circle cx="11.500" cy="4" r="1.500" stroke="#2a7ff0" /><path d="M13 4.500l4 2.500v4" stroke="#2a7ff0" /><path d="M3 11.500h4l4 4.500" stroke="red" /><circle cx="12" cy="17" r="1.200" stroke="red" /></g></Icon>
    </Tool>
    <Tool label="Measure">
      <Icon><g strokeWidth="1.100"><circle cx="3.500" cy="16.500" r="2" /><circle cx="17" cy="3" r="2" /><path d="M3.500 14.500Q4 4 15 3.500" /></g></Icon>
    </Tool>
    <Tool label="Pins">
      <svg width="16" height="18" viewBox="0 0 16 18">
        {["#fdb813", "#7f8c1c", "#d01414"].map((c, i) => (
          <g key={c} fill={c}><circle cx="3" cy={2.500 + i * 6.500} r="2.300" /><circle cx="13" cy={2.500 + i * 6.500} r="2.300" /></g>
        ))}
      </svg>
    </Tool>
    <Sep />
    <Tool label="Mouse">
      <Icon><g stroke="#333"><rect x="4" y="1.500" width="12.500" height="17" rx="5" /><path d="M4 9h12.500M10.200 1.500V4" /><rect x="8.700" y="4" width="3" height="4" rx="1.500" /></g></Icon>
    </Tool>
    <Sep />
    <label className="flex h-5 w-[215px] shrink-0 items-center rounded-sm border border-[#dcdcdc] bg-white pl-[3px] pr-1">
      <input
        aria-label="Component or net name"
        placeholder="Enter the component or net nan"
        className="mr-1 w-0 flex-1 text-xs outline-none placeholder:text-[#bdc0c6]"
      />
      <ChevronDown size={18} strokeWidth={1.5} className="text-[#888]" />
    </label>
    <Tool label="Find"><Search size={20} strokeWidth={1.5} className="text-[#333]" /></Tool>
    <Sep />
    <button className="mx-px h-[22px] w-[109px] shrink-0 border border-[#f00] bg-white text-sm leading-5 text-black">[ColorScheme]</button>
    <Sep />
    <Tool label="Show">
      <Icon><g stroke="#4a80d9" strokeWidth="1.100"><path d="M1 10Q5 4 10 4t9 6q-4 6-9 6T1 10z" /><circle cx="10" cy="10" r="4.500" /><circle cx="10" cy="10" r="2" /></g></Icon>
    </Tool>
    <Sep />
    <span className="flex-1" />
    <Tool label="Side panel">
      <svg width="22" height="18" viewBox="0 0 22 18" fill="none" stroke="#666" strokeWidth="1.500"><path d="M1 1h20v16H1zM7.500 1v16M11 5.500h6M11 9h6M11 12.500h6" /></svg>
    </Tool>
  </div>
);

const LAYERS = ["1", "2", "3", "4", "5", "6", "7", "8", "9", "10", "11", "12", "ALL"];

const layerColor = (l: string) => (l === "1" ? "bg-[#004400]" : l === "12" ? "bg-[#008040]" : "bg-[#4d4d4d]");

const Layers = () => (
  <div className="absolute left-0 top-0 flex flex-col gap-[6px] rounded border border-[#e2e2e2] bg-white px-1 py-1">
    {LAYERS.map((l) => (
      <button
        key={l}
        className={`h-6 w-6 rounded-xs border border-[#8a8a8a] text-center font-['Liberation_Serif',serif] leading-[22px] text-[#d6d6d6] ${
          l === "ALL" ? "text-xs" : "text-base"
        } ${layerColor(l)}`}
      >
        {l}
      </button>
    ))}
  </div>
);

const Handle = ({ flip }: { flip?: boolean }) => (
  <button aria-label="Collapse panel" className="block h-[110px] w-full shrink-0">
    <svg width="9" height="110" viewBox="0 0 9 110" className="block" fill="none">
      <path d={flip ? "M0 0L9 12V98L0 110z" : "M9 0L0 13V97L9 110z"} fill="#d6eafd" stroke="#9dcdf5" />
      <path d="M6 52L3 55l3 3" stroke="#4aa3ee" />
    </svg>
  </button>
);

const Workspace = () => (
  <section className="flex min-w-0 flex-1 flex-col border-l border-[#d9d9d9] bg-white">
    <div className="flex h-[34px] shrink-0 items-center gap-[5px] border-b border-[#dcdcdc] bg-[#fafafa] pl-2 pr-[11px]">
      <button className="flex h-6 w-[139px] items-center gap-1 rounded-sm border border-[#707070] pl-[6px] text-sm text-[#777]">
        <svg width="18" height="18" viewBox="0 0 18 18" fill="none" stroke="#222" strokeWidth="1.300">
          <path d="M1 9.500L9 1.500l8 8M3.500 8v9h11V8M7 17v-5h4v5" />
        </svg>
        Member Center
      </button>
      <button className="h-6 w-[323px] rounded-sm border border-black bg-white text-sm font-bold text-black">
        Moto X30-SR28D20430_B PCB layer.pcb
      </button>
      <span className="flex-1" />
      <button aria-label="Close all tabs" className="text-[#777]">
        <svg width="18" height="18" viewBox="0 0 18 18" fill="none" stroke="currentColor" strokeWidth="2">
          <path d="M1 14V1h14" />
          <rect x="5" y="5" width="12" height="12" rx="1" fill="currentColor" />
          <path d="M8.500 8.500l5 5M13.500 8.500l-5 5" stroke="#fff" strokeWidth="1.500" />
        </svg>
      </button>
    </div>
    <div className="flex min-h-0 flex-1">
      <div className="flex min-w-0 flex-1 flex-col">
        <Toolbar />
        <div className="relative min-h-0 flex-1 overflow-hidden">
          <Board />
          <Layers />
        </div>
      </div>
      <div className="flex w-[10px] shrink-0 flex-col border-l border-[#dcdcdc] bg-[#fafafa]">
        <div className="flex-[326]" />
        <Handle />
        <div className="flex-[296]" />
      </div>
    </div>
  </section>
);

const TitleBar = () => (
  <header className="flex h-10 shrink-0 items-center bg-[linear-gradient(90deg,#229cff,#2f7dff_12%,#3377ff_28%,#2f88ff_60%,#2b9cff_90%,#2b9fff)] pl-[10px] pr-[17px] text-white">
    <LogoIcon />
    <h1 className="ml-[10px] flex-1 text-sm">DZKJ Schematics [ VIP Due date: 2029-10-31 00:00:00 ]</h1>
    <button aria-label="Skin" className="text-[#e8e04a]">
      <Icon size={18}><rect x="2" y="6" width="16" height="12" rx="2" strokeWidth="1.600" /><path d="M6 6V3q0-1 1-1h6q1 0 1 1v3M6 10.500h8" strokeWidth="1.600" /></Icon>
    </button>
    <span className="ml-[10px] mr-3 h-5 w-px bg-[#7cbcff]" />
    <div className="flex items-center gap-[14px]">
      <button aria-label="Minimize" className="flex h-4 w-4 items-center"><span className="h-[2px] w-4 bg-white" /></button>
      <button aria-label="Maximize" className="h-4 w-4 rounded border-2 border-white" />
      <button aria-label="Close"><X size={24} strokeWidth={1.8} className="-m-1" /></button>
    </div>
  </header>
);

export default function App() {
  return (
    <div className="flex h-screen flex-col overflow-hidden bg-white font-['Noto_Sans',sans-serif]">
      <TitleBar />
      <nav className="flex h-8 shrink-0 items-center gap-[17px] border-b border-[#d6d6d6] bg-[#efefef] pl-[18px] pt-px text-sm text-black">
        {["File(F)", "VIP(V)", "Tool(T)", "Settings(S)", "PCB View settings(S)"].map((m) => (
          <button key={m}>{m}</button>
        ))}
      </nav>
      <main className="flex min-h-0 flex-1">
        <Sidebar />
        <div className="flex w-[9px] shrink-0 flex-col bg-[#fcfefc]">
          <div className="flex-[338]" />
          <Handle flip />
          <div className="flex-[318]" />
        </div>
        <Workspace />
      </main>
      <footer className="h-5 shrink-0 bg-[#0690dc] pt-px text-center font-['Liberation_Mono',monospace] text-[15px] font-bold leading-5 text-white">
        DZKJ Schematics https://www.dzkj16888.com
      </footer>
    </div>
  );
}
